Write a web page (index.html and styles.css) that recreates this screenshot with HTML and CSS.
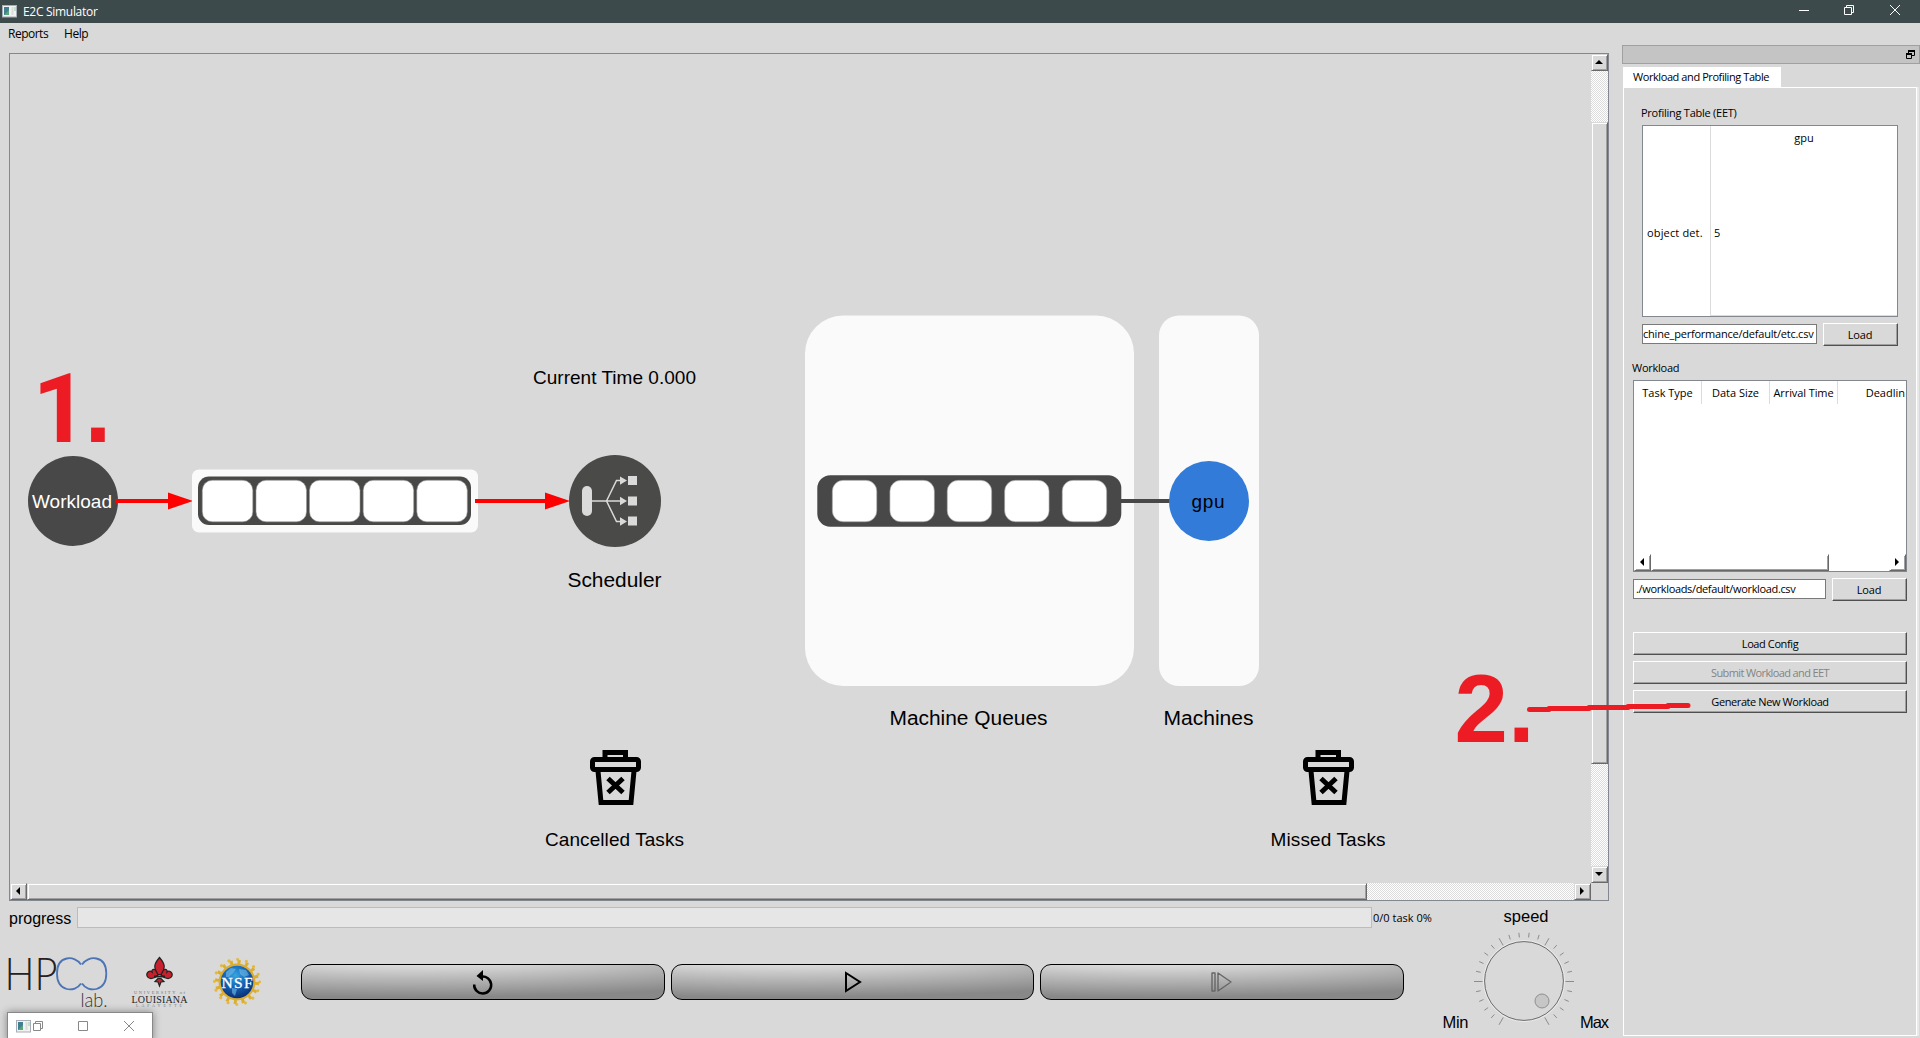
FILE: index.html
```html
<!DOCTYPE html>
<html lang="en">
<head>
<meta charset="utf-8">
<title>E2C Simulator</title>
<link rel="stylesheet" href="styles.css">
</head>
<body>
<header class="titlebar">
  <svg class="app-icon" width="16" height="13" viewBox="0 0 16 13"><rect x=".5" y=".5" width="14" height="11.500" fill="#f2f2f2" stroke="#a9adb5"/><rect x="2" y="2" width="5" height="8" fill="#3f7f8f"/><path d="M2 10 7 5v5z" fill="#5aa67c"/><path d="M9.500 2h2v8h-2z" fill="#dcdcdc"/><path d="M12 2h2v4h-2z" fill="#bfe0cf"/></svg>
  <span class="app-title">E2C Simulator</span>
  <svg class="win-controls" width="103" height="12" viewBox="0 0 103 12" fill="none" stroke="#fff"><path d="M0 6.500h10M45.500 3.500h7v7h-7zM47.500 3.500v-2h7v7h-2M91 1l10 10M101 1 91 11"/></svg>
</header>
<div class="window">
  <main class="left">
    <nav class="menubar"><span class="m-reports">Reports</span><span class="m-help">Help</span></nav>
    <section class="frame">
      <svg class="scene" width="1581" height="829" viewBox="10 54 1581 829">
        <defs>
          <g id="trash" fill="none" stroke="#000" stroke-width="5">
            <path d="M605 758v-5.500h20.500v5.500" stroke-width="5"/>
            <rect x="592.500" y="759.500" width="46" height="10" rx="2"/>
            <path d="M598 771l3 31.500h30l3-31.500"/>
            <path d="M608 778.500l15 14M623 778.500l-15 14"/>
          </g>
        </defs>
        <circle cx="73" cy="501" r="45" fill="#484848"/>
        <text x="32" y="508" font-size="19" textLength="80" class="light">Workload</text>
        <path d="M115 501h55M475 501h72" stroke="#f00" stroke-width="4"/>
        <path d="M168 492.500l25 8.500-25 8.500zM545 492.500l25 8.500-25 8.500z" fill="#f00"/>
        <rect x="192" y="469.500" width="286" height="63" rx="7" fill="#fafafa"/>
        <path d="M475 501h10" stroke="#f00" stroke-width="4"/>
        <rect x="198" y="476.500" width="273" height="48.500" rx="11" fill="#484847"/>
        <g fill="#fff" stroke="#999" stroke-width=".6">
          <rect x="202.300" y="480.300" width="50.500" height="41.500" rx="10"/><rect x="256" y="480.300" width="50.500" height="41.500" rx="10"/><rect x="309.500" y="480.300" width="50.500" height="41.500" rx="10"/><rect x="363.200" y="480.300" width="50.500" height="41.500" rx="10"/><rect x="416.800" y="480.300" width="50.500" height="41.500" rx="10"/>
        </g>
        <text x="533" y="384" font-size="19" textLength="163">Current Time 0.000</text>
        <circle cx="615" cy="501" r="46" fill="#4a4a48"/>
        <g fill="#dadada">
          <rect x="582" y="486" width="10" height="30" rx="5"/>
          <path d="M628 476h9v9h-9zM628 496.500h9v9h-9zM628 516.500h9v9h-9zM620 476.500l7 4-7 4.200zM620 496.800l7 4.200-7 4.200zM620 517.300l7 4.200-7 4.200z"/>
          <path d="M592 501h29M606.500 501l10-20.500h4M606.500 501l10 20.500h4" fill="none" stroke="#dadada" stroke-width="1.500"/>
        </g>
        <text x="567.500" y="587" font-size="20" textLength="94" lengthAdjust="spacingAndGlyphs">Scheduler</text>
        <rect x="805" y="315.500" width="329" height="370.500" rx="38" fill="#fafafa"/>
        <rect x="1159" y="315.500" width="100" height="370.500" rx="20" fill="#fafafa"/>
        <path d="M1121 501h50" stroke="#484848" stroke-width="4"/>
        <rect x="817.300" y="475.300" width="304" height="51.500" rx="13" fill="#484848"/>
        <g fill="#fff" stroke="#999" stroke-width=".6">
          <rect x="832.300" y="480.300" width="44.500" height="41.500" rx="11"/><rect x="889.900" y="480.300" width="44.500" height="41.500" rx="11"/><rect x="947.200" y="480.300" width="44.500" height="41.500" rx="11"/><rect x="1004.600" y="480.300" width="44.500" height="41.500" rx="11"/><rect x="1062.200" y="480.300" width="44.500" height="41.500" rx="11"/>
        </g>
        <circle cx="1209" cy="501" r="40" fill="#327bd9"/>
        <text x="1191.500" y="508" font-size="19" textLength="33">gpu</text>
        <text x="889.500" y="725" font-size="20" textLength="158" lengthAdjust="spacingAndGlyphs">Machine Queues</text>
        <text x="1163.500" y="725" font-size="20" textLength="90" lengthAdjust="spacingAndGlyphs">Machines</text>
        <use href="#trash"/>
        <use href="#trash" x="713"/>
        <text x="545" y="846" font-size="19" textLength="139">Cancelled Tasks</text>
        <text x="1270.500" y="846" font-size="19" textLength="115">Missed Tasks</text>
      </svg>
      <div class="vbar">
        <i class="raised sq"><svg width="8" height="4" viewBox="0 0 8 4"><path d="M0 4 4 0l4 4z"/></svg></i>
        <i class="track vt1"></i><i class="raised vthumb"></i><i class="track grow"></i>
        <i class="raised sq"><svg width="8" height="4" viewBox="0 0 8 4"><path d="M0 0h8L4 4z"/></svg></i>
      </div>
      <div class="hbar">
        <i class="raised sq"><svg width="4" height="8" viewBox="0 0 4 8"><path d="M4 0v8L0 4z"/></svg></i>
        <i class="raised hthumb"></i><i class="track grow"></i>
        <i class="raised sq"><svg width="4" height="8" viewBox="0 0 4 8"><path d="M0 0v8l4-4z"/></svg></i>
      </div>
    </section>
    <section class="bottom">
      <div class="run">
        <div class="progress"><span class="p-label">progress</span><div class="p-bar"></div><span class="p-count">0/0 task 0%</span></div>
        <div class="controls">
          <svg class="logos" width="268" height="60" viewBox="3 953 268 60">
            <defs><radialGradient id="globe" cx=".45" cy=".3" r=".7"><stop offset="0" stop-color="#35a5e2"/><stop offset=".5" stop-color="#1565b8"/><stop offset="1" stop-color="#0a2f74"/></radialGradient></defs>
            <text x="4.500" y="990" font-size="46" textLength="53" lengthAdjust="spacingAndGlyphs" class="thin">HP</text>
            <path d="M81 964.500C75 955 57 955 57 973.500S75 993 81 983.500M82 964.500c6-9.500 24.300-9.500 24.300 9s-18.300 19.500-24.300 10" fill="none" stroke="#4d74b5" stroke-width="1.800"/>
            <text x="80.500" y="1006.500" font-size="19" textLength="27" lengthAdjust="spacingAndGlyphs" class="thin lab">lab.</text>
            <g fill="#c8202c" stroke="#222" stroke-width="1.200">
              <path d="M158 975c-4 4-9 5-11 1-1-4 3-6 5-4-1-4 5-4 6 3z"/>
              <path d="M161 975c4 4 9 5 11 1 1-4-3-6-5-4 1-4-5-4-6 3z"/>
              <path d="M159.500 957.500c-6 7-6 10-1.500 17h3c4.500-7 4.500-10-1.500-17z"/>
              <path d="M158 978.500l-3 3 3 .5 1.500 4 1.500-4 3-.5-3-3z"/>
              <path d="M154 976.500h11" stroke-width="2"/>
            </g>
            <text x="134" y="993.500" font-size="4.500" textLength="51" class="seal">UNIVERSITY of</text>
            <text x="131.500" y="1002.500" font-size="10" textLength="56" class="seal big">LOUISIANA</text>
            <text x="136" y="1007" font-size="4" textLength="46" class="seal">LAFAYETTE</text>
            <circle cx="237" cy="982" r="18.500" fill="#d9ad32"/>
            <circle cx="237" cy="982" r="19.500" fill="none" stroke="#dcae30" stroke-width="5" stroke-dasharray="3 4.658"/>
            <circle cx="237" cy="982" r="22.600" fill="none" stroke="#e3b93f" stroke-width="3" stroke-linecap="round" stroke-dasharray=".1 8.775"/>
            <circle cx="237" cy="982" r="16.300" fill="url(#globe)"/>
            <path d="M226 972l5-4 5 1-3 4-4 4-3 0zM239 969l7 1 3 5-5 2-4-3zM232 988l5 1-2 7-3-3z" fill="#74bce4" opacity=".6"/>
            <text x="221.500" y="988" font-size="15.500" textLength="31" class="nsf">NSF</text>
          </svg>
          <div class="buttons">
            <button class="pill"><svg width="22" height="26" viewBox="472 969 22 26"><path d="M474.200 984.500a8.500 8.500 0 1 0 7-7.900" fill="none" stroke="#000" stroke-width="2.500"/><path d="M476.500 976l6.500-6v11z"/></svg></button>
            <button class="pill"><svg width="18" height="22" viewBox="0 0 18 22" fill="none" stroke="#000" stroke-width="2"><path d="M2 2v18L16 11z"/></svg></button>
            <button class="pill"><svg width="24" height="22" viewBox="0 0 24 22" fill="none" stroke="#666" stroke-width="1.400"><path d="M2 2h3v18H2zM8 2v18L21 11z" stroke-linejoin="round"/></svg></button>
          </div>
        </div>
      </div>
      <svg class="dial" width="180" height="137" viewBox="1432 901 180 137">
        <text x="1503.500" y="922" font-size="16.500" textLength="45">speed</text>
        <g id="tickmarks"></g>
        <circle cx="1524" cy="981" r="40.500" fill="none" stroke="#ececec"/>
        <circle cx="1524" cy="981" r="39.400" fill="none" stroke="#6c6c6c"/>
        <circle cx="1542" cy="1001" r="7" fill="#c6c6c6" stroke="#8f8f8f"/>
        <text x="1442.500" y="1028" font-size="16.500" textLength="26">Min</text>
        <text x="1580" y="1028" font-size="16.500" textLength="29">Max</text>
      </svg>
    </section>
  </main>
  <aside class="dock">
    <div class="dock-title"><svg width="9" height="9" viewBox="0 0 9 9"><path d="M2.500 3V.500h6v5H6M.500 3.500h5v5h-5z" fill="none" stroke="#000"/><path d="M2 1h7M0 4h6" stroke="#000" stroke-width="2"/></svg></div>
    <div class="tab"><span>Workload and Profiling Table</span></div>
    <div class="pane">
      <div class="group eet">
        <label class="t-eet">Profiling Table (EET)</label>
        <div class="table">
          <div class="row-head">object det.</div>
          <div class="col"><div class="col-head">gpu</div><div class="cell">5</div></div>
        </div>
        <div class="line"><div class="edit e1"><span>chine_performance/default/etc.csv</span></div><button class="btn load">Load</button></div>
      </div>
      <label class="t-wl">Workload</label>
      <div class="list">
        <div class="heads"><span>Task Type</span><span>Data Size</span><span class="tight">Arrival Time</span><span class="last">Deadlin</span></div>
        <div class="hbar mini">
          <i class="raised sq"><svg width="4" height="8" viewBox="0 0 4 8"><path d="M4 0v8L0 4z"/></svg></i>
          <i class="raised mthumb"></i><i class="grow"></i>
          <i class="raised sq"><svg width="4" height="8" viewBox="0 0 4 8"><path d="M0 0v8l4-4z"/></svg></i>
        </div>
      </div>
      <div class="line l2"><div class="edit"><span class="path2">./workloads/default/workload.csv</span></div><button class="btn load">Load</button></div>
      <div class="actions"><button class="btn">Load Config</button><button class="btn off">Submit Workload and EET</button><button class="btn">Generate New Workload</button></div>
    </div>
  </aside>
</div>
<svg class="notes" width="1920" height="1038" viewBox="0 0 1920 1038">
  <text x="32.500" y="442" font-size="97"><tspan class="one">1</tspan><tspan x="84.500">.</tspan></text>
  <text x="1454.500" y="742" font-size="96">2.</text>
  <path d="M1529.500 709.500H1549M1549 708.500h40M1589 707.500h39M1628 706.500h40M1668 705.500h20" />
</svg>
<div class="mini-window">
  <svg width="16" height="13" viewBox="0 0 16 13"><rect x=".5" y=".5" width="14" height="11.500" fill="#f2f2f2" stroke="#a9adb5"/><rect x="2" y="2" width="5" height="8" fill="#3f7f8f"/><path d="M2 10 7 5v5z" fill="#5aa67c"/><path d="M9.500 2h2v8h-2z" fill="#dcdcdc"/><path d="M12 2h2v4h-2z" fill="#bfe0cf"/></svg>
  <svg width="103" height="12" viewBox="0 0 103 12" fill="none" stroke="#888"><path d="M.500 3.500h7v7h-7zM2.500 3.500v-2h7v7h-2M45.500 1.500h9v9h-9zM91 1l10 10M101 1 91 11"/></svg>
</div>
<script src="dial.js"></script>
</body>
</html>
```
FILE: dial.js
```js
// Dial notches: one every 12 degrees, a long one every 60.
const marks = document.getElementById('tickmarks');
let d = '';
for (let deg = -60; deg <= 240; deg += 12) {
  const a = deg * Math.PI / 180;
  const long = (deg + 60) % 60 === 0;
  const r1 = long ? 41.5 : 44.3;
  const r2 = long ? 50 : 49;
  d += `M${(1524 + r1 * Math.cos(a)).toFixed(2)} ${(981.5 - r1 * Math.sin(a)).toFixed(2)}L${(1524 + r2 * Math.cos(a)).toFixed(2)} ${(981.5 - r2 * Math.sin(a)).toFixed(2)}`;
}
const p = document.createElementNS('http://www.w3.org/2000/svg', 'path');
p.setAttribute('d', d);
marks.appendChild(p);
```
FILE: styles.css
```css
* { box-sizing: border-box; }
body { margin: 0; width: 1920px; height: 1038px; overflow: hidden; background: #d9d9d9; position: relative; font: 11px/14px "Open Sans", "Noto Sans", sans-serif; color: #000; }
svg { display: block; flex: none; }
span, label, .row-head, .col-head, .cell, button { white-space: nowrap; }
button { font: inherit; color: inherit; padding: 0; margin: 0; }

.titlebar { height: 23px; background: #3d4a4b; display: flex; align-items: center; padding-left: 2px; color: #fff; }
.app-icon { margin-bottom: 1px; }
.app-title { margin-left: 5px; font-size: 12px; letter-spacing: -0.3px; }
.win-controls { margin: 0 18px 3px auto; }

.window { display: flex; height: 1015px; }
.left { width: 1622px; display: flex; flex-direction: column; }
.menubar { height: 30px; padding: 4px 8px; display: flex; gap: 16px; font-size: 12px; letter-spacing: -0.5px; }
.frame { margin-left: 9px; width: 1600px; height: 848px; border: 1px solid #828790; display: grid; grid-template: 829px 17px / 1581px 17px; }
.scene, .notes { font-family: "Liberation Sans", Arial, sans-serif; }
.light { fill: #fff; }
.vbar { display: flex; flex-direction: column; }
.hbar { display: flex; }
.raised { border: 1px solid; border-color: #d9d9d9 #696969 #696969 #d9d9d9; box-shadow: inset 1px 1px #fff, inset -1px -1px #a0a0a0; display: flex; align-items: center; justify-content: center; flex: none; }
.sq { width: 17px; height: 17px; padding: 0 2px 2px 0; }
.track { background: repeating-conic-gradient(#fff 0 25%, #dcdcdc 0 50%) 0 0 / 2px 2px; }
.vt1 { height: 51px; }
.vthumb { height: 642px; }
.hthumb { width: 1340px; }
.grow { flex: 1; }

.bottom { display: flex; height: 137px; width: 1612px; }
.run { width: 1432px; display: flex; flex-direction: column; }
.progress { height: 34px; padding: 6px 0 0 9px; display: flex; align-items: flex-start; }
.p-label { width: 68px; font: 16px/24px "Liberation Sans", Arial, sans-serif; }
.p-bar { width: 1295px; height: 21px; background: #e6e6e6; border: 1px solid #bcbcbc; }
.p-count { margin: 4px 0 0 1px; }
.controls { display: flex; padding: 18px 0 0 3px; }
.thin { font-family: Lato, sans-serif; font-weight: 300; fill: #222; }
.lab { fill: #333; }
.seal { font-family: "Liberation Serif", serif; fill: #777; }
.seal.big { fill: #222; }
.nsf { font-family: "Liberation Serif", serif; fill: #fff; stroke: #fff; stroke-width: .3px; }
.buttons { display: flex; gap: 6px; padding: 11px 0 0 30px; }
.pill { width: 363.7px; height: 36px; border: 1px solid #000; border-radius: 11px; background: radial-gradient(135% 135% at 30% -40%, #fff, #888); display: flex; align-items: center; justify-content: center; }
.dial { font-family: "Liberation Sans", Arial, sans-serif; }
#tickmarks { stroke: #8c8c8c; stroke-width: 1; }

.dock { width: 298px; padding-top: 22px; display: flex; flex-direction: column; }
.dock-title { height: 19px; border: 1px solid #a0a0a0; background: #c4c4c4; display: flex; align-items: center; justify-content: flex-end; padding-right: 4px; }
.tab { margin: 3px 0 0 1px; width: 158px; height: 20px; background: #fff; padding: 3px 0 0 10px; }
.tab span { letter-spacing: -0.42px; }
.pane { margin-left: 1px; width: 294px; height: 949px; border: 1px solid #fff; padding: 18px 9px 0; box-shadow: 2px 0 #e9e9e9; display: flex; flex-direction: column; }
.group { padding: 0 9px; }
label { display: block; height: 19px; margin-left: -1px; letter-spacing: -0.25px; }
.table { width: 256px; height: 192px; border: 1px solid #828790; background: #fff; display: flex; }
.row-head { width: 67px; padding: 100px 0 0 4px; letter-spacing: 0.15px; }
.col { flex: 1; border-left: 1px solid #dcdcdc; border-bottom: 1px solid #dcdcdc; }
.col-head { text-align: center; padding: 5px 0 81px; }
.cell { padding-left: 3px; }
.line { display: flex; gap: 6px; align-items: flex-start; margin-top: 6px; }
.edit { flex: 1; height: 20px; margin-top: 1px; border: 1px solid #7a7a7a; background: #fff; overflow: hidden; display: flex; align-items: center; padding-left: 2px; letter-spacing: -0.35px; }
.e1 { padding-left: 0; letter-spacing: -0.22px; }
.btn { height: 23px; background: #d9d9d9; border: 1px solid; border-color: #fff #505050 #505050 #fff; box-shadow: inset -1px -1px #a0a0a0; text-align: center; line-height: 20px; letter-spacing: -0.4px; }
.load { width: 75px; padding-right: 1px; letter-spacing: -0.2px; }
.t-wl { margin-top: 15px; }
.list { width: 274px; height: 192px; border: 1px solid #828790; background: #fff; display: flex; flex-direction: column; justify-content: space-between; overflow: hidden; }
.heads { display: flex; height: 23px; }
.heads span { width: 68px; border-right: 1px solid #dcdcdc; text-align: center; padding-top: 5px; flex: none; overflow: hidden; }
.heads .tight { letter-spacing: -0.1px; }
.heads .last { border: 0; text-align: right; padding-right: 1px; }
.mini .raised { border-color: #fff #696969 #696969 #fff; }
.mthumb { width: 178px; }
.actions { margin-top: 31px; display: flex; flex-direction: column; gap: 6px; }
.off { color: #848484; letter-spacing: -0.62px; }

.notes { position: absolute; inset: 0; pointer-events: none; font-weight: bold; fill: #ed1c24; }
.notes .one { font-family: Roboto, sans-serif; }
.notes path { stroke: #ed1c24; stroke-width: 5; stroke-linecap: round; }
.mini-window { position: absolute; left: 7px; top: 1012px; width: 146px; height: 30px; background: #fff; border: 1px solid #888; box-shadow: 0 0 8px rgba(0,0,0,.4); display: flex; padding: 7px 0 0 8px; gap: 1px; }
```
